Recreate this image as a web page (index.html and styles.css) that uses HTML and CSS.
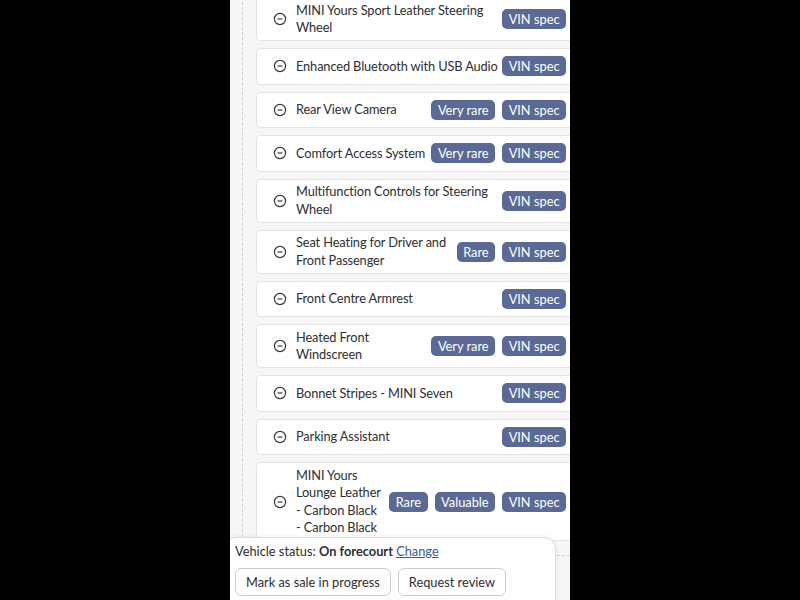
FILE: index.html
```html
<!DOCTYPE html>
<html lang="en">
<head>
    <meta charset="UTF-8">
    <meta name="viewport" content="width=device-width, initial-scale=1.0">
    <title>Vehicle features</title>
    <link rel="stylesheet" href="styles.css">
</head>
<body>
    <div class="phone">
        <div class="feature-tree">
            <ul class="feature-list">
                <li class="feature">
                    <svg class="toggle" viewBox="0 0 14 14"><circle cx="7" cy="7" r="5.6"/><path d="M4.6 7h4.8"/></svg>
                    <span class="feature-name">MINI Yours Sport Leather Steering Wheel</span>
                    <span class="badge">VIN spec</span>
                </li>
                <li class="feature">
                    <svg class="toggle" viewBox="0 0 14 14"><circle cx="7" cy="7" r="5.6"/><path d="M4.6 7h4.8"/></svg>
                    <span class="feature-name">Enhanced Bluetooth with USB Audio</span>
                    <span class="badge">VIN spec</span>
                </li>
                <li class="feature">
                    <svg class="toggle" viewBox="0 0 14 14"><circle cx="7" cy="7" r="5.6"/><path d="M4.6 7h4.8"/></svg>
                    <span class="feature-name">Rear View Camera</span>
                    <span class="badge">Very rare</span>
                    <span class="badge">VIN spec</span>
                </li>
                <li class="feature">
                    <svg class="toggle" viewBox="0 0 14 14"><circle cx="7" cy="7" r="5.6"/><path d="M4.6 7h4.8"/></svg>
                    <span class="feature-name">Comfort Access System</span>
                    <span class="badge">Very rare</span>
                    <span class="badge">VIN spec</span>
                </li>
                <li class="feature">
                    <svg class="toggle" viewBox="0 0 14 14"><circle cx="7" cy="7" r="5.6"/><path d="M4.6 7h4.8"/></svg>
                    <span class="feature-name">Multifunction Controls for Steering Wheel</span>
                    <span class="badge">VIN spec</span>
                </li>
                <li class="feature">
                    <svg class="toggle" viewBox="0 0 14 14"><circle cx="7" cy="7" r="5.6"/><path d="M4.6 7h4.8"/></svg>
                    <span class="feature-name">Seat Heating for Driver and Front Passenger</span>
                    <span class="badge">Rare</span>
                    <span class="badge">VIN spec</span>
                </li>
                <li class="feature">
                    <svg class="toggle" viewBox="0 0 14 14"><circle cx="7" cy="7" r="5.6"/><path d="M4.6 7h4.8"/></svg>
                    <span class="feature-name">Front Centre Armrest</span>
                    <span class="badge">VIN spec</span>
                </li>
                <li class="feature">
                    <svg class="toggle" viewBox="0 0 14 14"><circle cx="7" cy="7" r="5.6"/><path d="M4.6 7h4.8"/></svg>
                    <span class="feature-name">Heated Front Windscreen</span>
                    <span class="badge">Very rare</span>
                    <span class="badge">VIN spec</span>
                </li>
                <li class="feature">
                    <svg class="toggle" viewBox="0 0 14 14"><circle cx="7" cy="7" r="5.6"/><path d="M4.6 7h4.8"/></svg>
                    <span class="feature-name">Bonnet Stripes - MINI Seven</span>
                    <span class="badge">VIN spec</span>
                </li>
                <li class="feature">
                    <svg class="toggle" viewBox="0 0 14 14"><circle cx="7" cy="7" r="5.6"/><path d="M4.6 7h4.8"/></svg>
                    <span class="feature-name">Parking Assistant</span>
                    <span class="badge">VIN spec</span>
                </li>
                <li class="feature">
                    <svg class="toggle" viewBox="0 0 14 14"><circle cx="7" cy="7" r="5.6"/><path d="M4.6 7h4.8"/></svg>
                    <span class="feature-name">MINI Yours Lounge Leather <span class="nowrap">- Carbon Black</span> <span class="nowrap">- Carbon Black</span></span>
                    <span class="badge">Rare</span>
                    <span class="badge">Valuable</span>
                    <span class="badge">VIN spec</span>
                </li>
            </ul>
            <div class="tree-next"></div>
        </div>

        <div class="status-sheet">
            <p class="status-line">Vehicle status: <strong>On forecourt</strong> <a href="#">Change</a></p>
            <div class="status-actions">
                <button>Mark as sale in progress</button>
                <button>Request review</button>
            </div>
        </div>
    </div>
</body>
</html>
```

FILE: styles.css
```css
:root {
    --page-bg: #000;
    --panel-bg: #f6f6f7;
    --card-border: #e3e4e6;
    --text: #2e2e33;
    --badge: #5a6995;
    --link: #3d5a98;
}

* {
    box-sizing: border-box;
}

body {
    margin: 0;
    background: var(--page-bg);
    font-family: Lato, "Noto Sans", sans-serif;
    font-size: 12.8px;
    color: var(--text);
}

.phone {
    position: relative;
    width: 340px;
    height: 600px;
    margin: 0 auto;
    background: var(--panel-bg);
    overflow: hidden;
}

.feature-tree {
    margin-left: 12px;
    margin-top: -3px;
    padding-left: 13px;
    border-left: 1px dashed #cfd0d3;
    min-height: 620px;
}

.feature-list {
    list-style: none;
    margin: 0;
    padding: 0;
    width: 320px;
    display: flex;
    flex-direction: column;
    gap: 7px;
}

.feature {
    display: flex;
    align-items: center;
    min-height: 36.5px;
    padding: 3.5px 9px 3.5px 16px;
    background: #fff;
    border: 1px solid var(--card-border);
    border-radius: 4px;
    line-height: 17.5px;
}

.toggle {
    flex: none;
    width: 14px;
    height: 14px;
    margin-right: 9px;
    fill: none;
    stroke: #3a3a40;
    stroke-width: 1.2;
}

.feature-name {
    flex: 1;
    letter-spacing: -0.12px;
}

.nowrap {
    white-space: nowrap;
}

.badge {
    flex: none;
    margin-left: 7px;
    height: 20px;
    padding: 0 6.5px;
    border-radius: 5px;
    background: var(--badge);
    color: #fff;
    line-height: 20px;
    white-space: nowrap;
}

.feature-name + .badge {
    margin-left: 2px;
}

.tree-next {
    margin-top: 14px;
    border-top: 1px dashed #cfd0d3;
}

.status-sheet {
    position: absolute;
    left: -6px;
    top: 537px;
    width: 332px;
    height: 80px;
    padding: 5px 0 0 10px;
    background: #fff;
    border: 1px solid #dcdcdf;
    border-radius: 12px 12px 0 0;
    box-shadow: 0 -1px 4px rgba(0, 0, 0, 0.06);
}

.status-line {
    margin: 0;
    line-height: 17px;
}

.status-line strong {
    font-weight: 700;
}

.status-line a {
    color: var(--link);
}

.status-actions {
    display: flex;
    gap: 7px;
    margin-top: 8px;
}

button {
    height: 28px;
    padding: 0 10px;
    font: inherit;
    color: var(--text);
    background: #fff;
    border: 1px solid #cdced2;
    border-radius: 6px;
}
```
